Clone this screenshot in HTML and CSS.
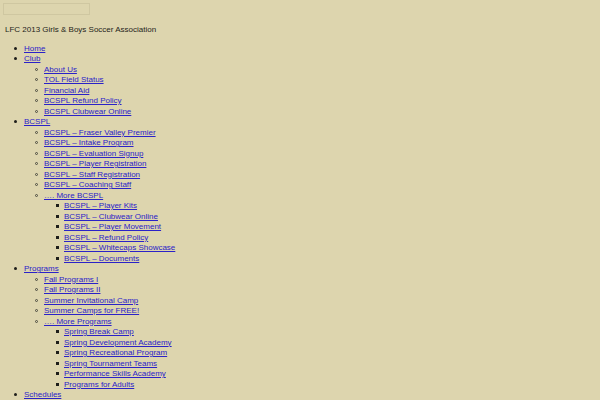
FILE: index.html
```html
<!DOCTYPE html>
<html>
<head>
<meta charset="utf-8">
<link rel="stylesheet" href="styles.css">
</head>
<body>
<div class="search"><input class="search-input" type="text"></div>
<div class="site-title">LFC 2013 Girls &amp; Boys Soccer Association</div>
<ul class="menu">
  <li><a href="#">Home</a></li>
  <li><a href="#">Club</a>
    <ul>
      <li><a href="#">About Us</a></li>
      <li><a href="#">TOL Field Status</a></li>
      <li><a href="#">Financial Aid</a></li>
      <li><a href="#">BCSPL Refund Policy</a></li>
      <li><a href="#">BCSPL Clubwear Online</a></li>
    </ul>
  </li>
  <li><a href="#">BCSPL</a>
    <ul>
      <li><a href="#">BCSPL – Fraser Valley Premier</a></li>
      <li><a href="#">BCSPL – Intake Program</a></li>
      <li><a href="#">BCSPL – Evaluation Signup</a></li>
      <li><a href="#">BCSPL – Player Registration</a></li>
      <li><a href="#">BCSPL – Staff Registration</a></li>
      <li><a href="#">BCSPL – Coaching Staff</a></li>
      <li><a href="#">…. More BCSPL</a>
        <ul>
          <li><a href="#">BCSPL – Player Kits</a></li>
          <li><a href="#">BCSPL – Clubwear Online</a></li>
          <li><a href="#">BCSPL – Player Movement</a></li>
          <li><a href="#">BCSPL – Refund Policy</a></li>
          <li><a href="#">BCSPL – Whitecaps Showcase</a></li>
          <li><a href="#">BCSPL – Documents</a></li>
        </ul>
      </li>
    </ul>
  </li>
  <li><a href="#">Programs</a>
    <ul>
      <li><a href="#">Fall Programs I</a></li>
      <li><a href="#">Fall Programs II</a></li>
      <li><a href="#">Summer Invitational Camp</a></li>
      <li><a href="#">Summer Camps for FREE!</a></li>
      <li><a href="#">…. More Programs</a>
        <ul>
          <li><a href="#">Spring Break Camp</a></li>
          <li><a href="#">Spring Development Academy</a></li>
          <li><a href="#">Spring Recreational Program</a></li>
          <li><a href="#">Spring Tournament Teams</a></li>
          <li><a href="#">Performance Skills Academy</a></li>
          <li><a href="#">Programs for Adults</a></li>
        </ul>
      </li>
    </ul>
  </li>
  <li><a href="#">Schedules</a></li>
</ul>
</body>
</html>
```
FILE: styles.css
```css
html, body {
  margin: 0;
  background: #ddd5ae;
}
body {
  padding: 3px 0 0 5px;
  font-family: "Liberation Sans", Arial, sans-serif;
  font-size: 8px;
  line-height: 10.5px;
  color: #1e1e1a;
}
.search {
  margin-left: -2px;
  height: 12px;
}
.search-input {
  display: block;
  box-sizing: border-box;
  width: 87px;
  height: 12px;
  margin: 0;
  padding: 0;
  border: 1px solid #cfc7a1;
  background: transparent;
}
.site-title {
  margin-top: 10px;
}
.menu {
  margin: 8px 0 0 0;
  padding-left: 19px;
}
.menu ul {
  margin: 0;
  padding-left: 20px;
}
.menu li {
  margin: 0;
  list-style: none;
}
.menu li::before {
  content: "";
  display: inline-block;
  box-sizing: border-box;
  width: 3px;
  height: 3px;
  border-radius: 50%;
  background: #1e1e1a;
  margin-left: -10px;
  margin-right: 7px;
  vertical-align: 1px;
}
.menu ul li::before {
  background: transparent;
  border: 1px solid #4a4a40;
  margin-left: -9px;
  margin-right: 6px;
}
.menu ul ul li::before {
  background: #1e1e1a;
  border: 0;
  border-radius: 0;
  margin-left: -8px;
  margin-right: 5px;
}
.menu a {
  color: #2b22c8;
}
```
